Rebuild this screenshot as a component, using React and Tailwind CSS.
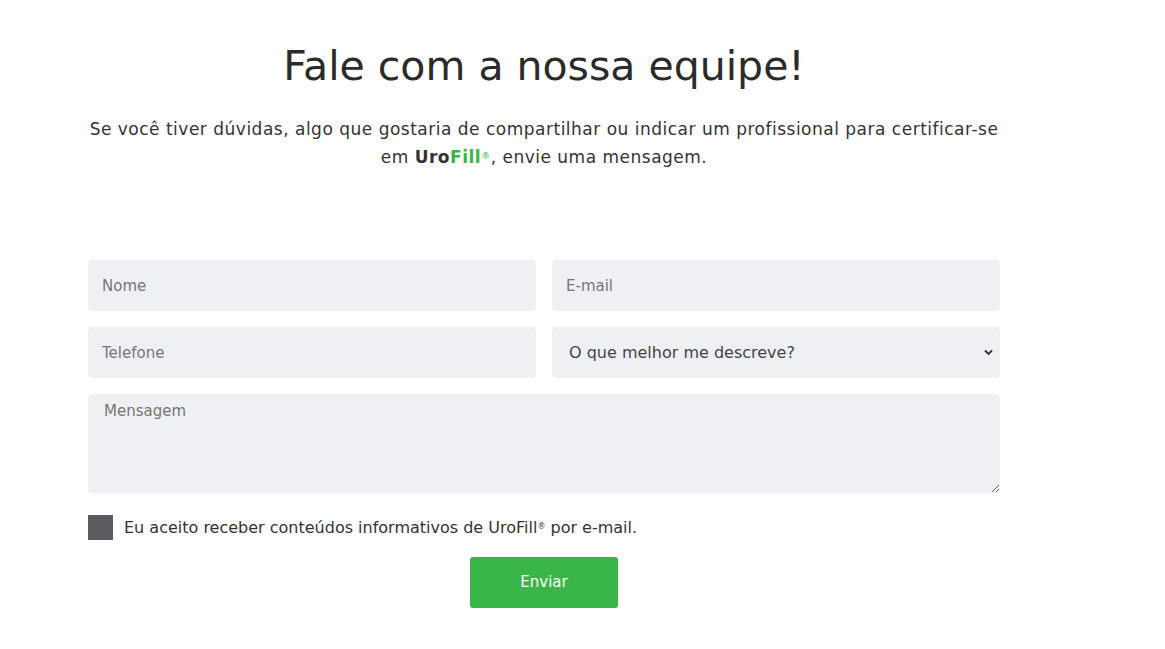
export default function App() {
  const font = { fontFamily: '"DejaVu Sans", "Noto Sans", sans-serif' };
  return (
    <div className="min-h-screen bg-white text-[#333]" style={font}>
      <div className="ml-[88px] w-[912px] pt-[40px]">
        <h1 className="text-center text-[41px] leading-[52px] font-normal text-[#2b2b2b]">
          Fale com a nossa equipe!
        </h1>
        <p className="mt-[23px] text-center text-[17px] leading-[28px] tracking-[0.5px] text-[#333]">
          Se você tiver dúvidas, algo que gostaria de compartilhar ou indicar um profissional para certificar-se
          <br />
          em <span className="font-bold text-[#333]">Uro</span>
          <span className="font-bold text-[#3ab54a]">Fill</span>
          <sup className="text-[#3ab54a] text-[9px]">®</sup>, envie uma mensagem.
        </p>

        <form className="mt-[89px] flex flex-col gap-[16px]">
          <div className="grid grid-cols-2 gap-[16px]">
            <input
              placeholder="Nome"
              className="h-[51px] rounded-[4px] bg-[#eff0f4] px-[14px] text-[15px] placeholder:text-[#777] outline-none"
            />
            <input
              placeholder="E-mail"
              className="h-[51px] rounded-[4px] bg-[#eff0f4] px-[14px] text-[15px] placeholder:text-[#777] outline-none"
            />
            <input
              placeholder="Telefone"
              className="h-[51px] rounded-[4px] bg-[#eff0f4] px-[14px] text-[15px] placeholder:text-[#777] outline-none"
            />
            <div className="relative">
              <select className="h-[51px] w-full appearance-none rounded-[4px] bg-[#eff0f4] px-[17px] text-[16px] text-[#444] outline-none">
                <option>O que melhor me descreve?</option>
              </select>
              <svg className="pointer-events-none absolute right-[7px] top-[22px]" width="9" height="7" viewBox="0 0 9 7">
                <path d="M1 1.5 L4.5 5 L8 1.5" fill="none" stroke="#333" strokeWidth="1.8" />
              </svg>
            </div>
          </div>
          <textarea
            placeholder="Mensagem"
            className="h-[99px] rounded-[4px] bg-[#eff0f4] px-[16px] pt-[6px] text-[15px] placeholder:text-[#777] outline-none"
          />
          <label className="mt-[6px] flex items-center gap-[11px] text-[16px] text-[#333]">
            <span className="h-[25px] w-[25px] bg-[#5b5b5f]" />
            <span>
              Eu aceito receber conteúdos informativos de UroFill<sup className="text-[8px]">®</sup> por e-mail.
            </span>
          </label>
          <div className="flex justify-center">
            <button
              type="button"
              className="mt-px h-[51px] w-[148px] rounded-[3px] bg-[#3ab54a] text-[15px] text-white"
            >
              Enviar
            </button>
          </div>
        </form>
      </div>
    </div>
  );
}
